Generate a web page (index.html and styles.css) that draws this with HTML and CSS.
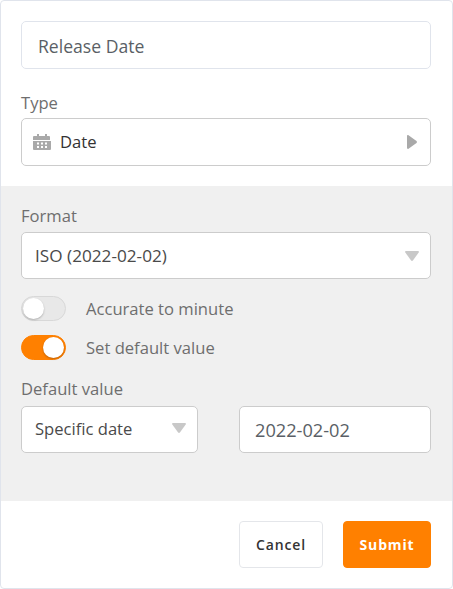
FILE: index.html
```html
<!DOCTYPE html>
<html lang="en">
<head>
<meta charset="utf-8">
<title>Edit field</title>
<link rel="stylesheet" href="styles.css">
</head>
<body>
<div class="card">
  <div class="top">
    <div class="box name-box">Release Date</div>
    <div class="label type-label">Type</div>
    <div class="box select type-select">
      <svg class="cal" viewBox="0 0 18 18" width="18" height="18" aria-hidden="true">
        <path fill="#a9a9a9" d="M4 1h2v2h6V1h2v2h2a1 1 0 0 1 1 1v3H0V4a1 1 0 0 1 1-1h3z"/>
        <path fill="#a9a9a9" fill-rule="evenodd" d="M0 8h18v8a1 1 0 0 1-1 1H1a1 1 0 0 1-1-1zM4 9.500v2h2v-2zM8 9.500v2h2v-2zM12 9.500v2h2v-2zM4 13v2h2v-2zM8 13v2h2v-2zM12 13v2h2v-2z"/>
      </svg>
      <span class="type-text">Date</span>
      <svg class="caret-right" viewBox="0 0 10 14" width="10" height="14" aria-hidden="true"><path fill="#a9a9a9" d="M0 1.200C0 .2.800-.2 1.500.3l8 5.800c.6.500.6 1.300 0 1.800l-8 5.800c-.7.500-1.500.1-1.500-.9z"/></svg>
    </div>
  </div>
  <div class="gray">
    <div class="label">Format</div>
    <div class="box select format-select">
      <span>ISO (2022-02-02)</span>
      <svg class="caret-down" viewBox="0 0 14 10" width="14" height="10" aria-hidden="true"><path fill="#c8c8c8" d="M1.200 0C.2 0-.2.800.3 1.500l5.800 8c.5.600 1.300.6 1.800 0l5.800-8c.5-.7.1-1.500-.9-1.500z"/></svg>
    </div>
    <div class="toggle-row first-toggle">
      <span class="toggle"><span class="knob"></span></span>
      <span class="toggle-text">Accurate to minute</span>
    </div>
    <div class="toggle-row second-toggle">
      <span class="toggle on"><span class="knob"></span></span>
      <span class="toggle-text">Set default value</span>
    </div>
    <div class="label default-label">Default value</div>
    <div class="default-row">
      <div class="box select specific">
        <span class="specific-text">Specific date</span>
        <svg class="caret-down" viewBox="0 0 14 10" width="14" height="10" aria-hidden="true"><path fill="#c8c8c8" d="M1.200 0C.2 0-.2.800.3 1.500l5.800 8c.5.600 1.300.6 1.800 0l5.800-8c.5-.7.1-1.500-.9-1.500z"/></svg>
      </div>
      <div class="box date-input">2022-02-02</div>
    </div>
  </div>
  <div class="footer">
    <button class="btn cancel" type="button">Cancel</button>
    <button class="btn submit" type="button">Submit</button>
  </div>
</div>
</body>
</html>
```

FILE: styles.css
```css
* { box-sizing: border-box; }
html, body { margin: 0; padding: 0; background: #fff; }
body {
  width: 453px;
  height: 589px;
  font-family: "Open Sans", "Liberation Sans", sans-serif;
  font-size: 16.6px;
  color: #666;
  overflow: hidden;
}
.card {
  width: 453px;
  height: 589px;
  border: 1px solid #e0e4ec;
  border-radius: 4px;
  background: #fff;
  display: flex;
  flex-direction: column;
  overflow: hidden;
}
.top { height: 185px; padding: 20px 21px 0 20px; flex: none; }
.box {
  background: #fff;
  border: 1px solid #ccc;
  border-radius: 5px;
  display: flex;
  align-items: center;
}
.name-box {
  height: 48px;
  border-color: #e0e4ec;
  padding: 2px 0 0 16px;
  font-size: 17.6px;
  color: #5a5f66;
}
.label { height: 24px; line-height: 24px; color: #6e6e6e; }
.type-label { margin-top: 22px; height: 27px; }
.select { justify-content: space-between; }
.type-select {
  height: 48px;
  justify-content: flex-start;
  padding: 0 13px 0 11px;
}
.type-text { margin: 0 0 2px 9px; color: #333; flex: 1; }
.cal { display: block; }
.caret-right { margin-bottom: 1px; }
.gray {
  height: 315px;
  flex: none;
  background: #f0f0f0;
  padding: 18px 21px 0 20px;
}
.format-select {
  margin-top: 4px;
  height: 47px;
  padding: 0 11px 0 13px;
  font-size: 17.2px;
  color: #4a4a4a;
}
.toggle-row { display: flex; align-items: center; height: 25px; }
.first-toggle { margin-top: 17px; }
.second-toggle { margin-top: 14px; }
.toggle-text { margin-left: 20px; color: #6e6e6e; }
.toggle {
  width: 45px;
  height: 25px;
  border-radius: 13px;
  background: #e8e8e8;
  border: 1px solid #d8d8d8;
  display: flex;
  align-items: center;
  padding: 0 1px;
}
.knob {
  width: 21px;
  height: 21px;
  border-radius: 50%;
  background: #fff;
  box-shadow: 0 1px 2px rgba(0, 0, 0, .25);
}
.toggle.on {
  background: #ff8000;
  border-color: #ff8000;
  justify-content: flex-end;
}
.default-label { margin-top: 17px; }
.default-row { margin-top: 5px; display: flex; justify-content: space-between; }
.specific {
  width: 177px;
  height: 47px;
  padding: 0 11px 0 13px;
  color: #4a4a4a;
}
.specific-text { margin-bottom: 2px; }
.specific .caret-down { margin-bottom: 4px; }
.date-input {
  width: 192px;
  height: 47px;
  padding-left: 15px;
  font-size: 18.2px;
  color: #5a5f66;
}
.footer {
  flex: 1;
  padding: 20px 21px 0 20px;
  display: flex;
  justify-content: flex-end;
  gap: 20px;
}
.btn {
  height: 47px;
  border-radius: 4px;
  font-family: "Open Sans", "Liberation Sans", sans-serif;
  font-size: 14px;
  font-weight: 600;
  letter-spacing: .85px;
  padding: 0;
  cursor: pointer;
}
.cancel { width: 84px; background: #fff; border: 1px solid #e4e6ea; color: #333; }
.submit { width: 88px; background: #ff8000; border: 1px solid #ff8000; color: #fff; font-weight: 700; }
```
